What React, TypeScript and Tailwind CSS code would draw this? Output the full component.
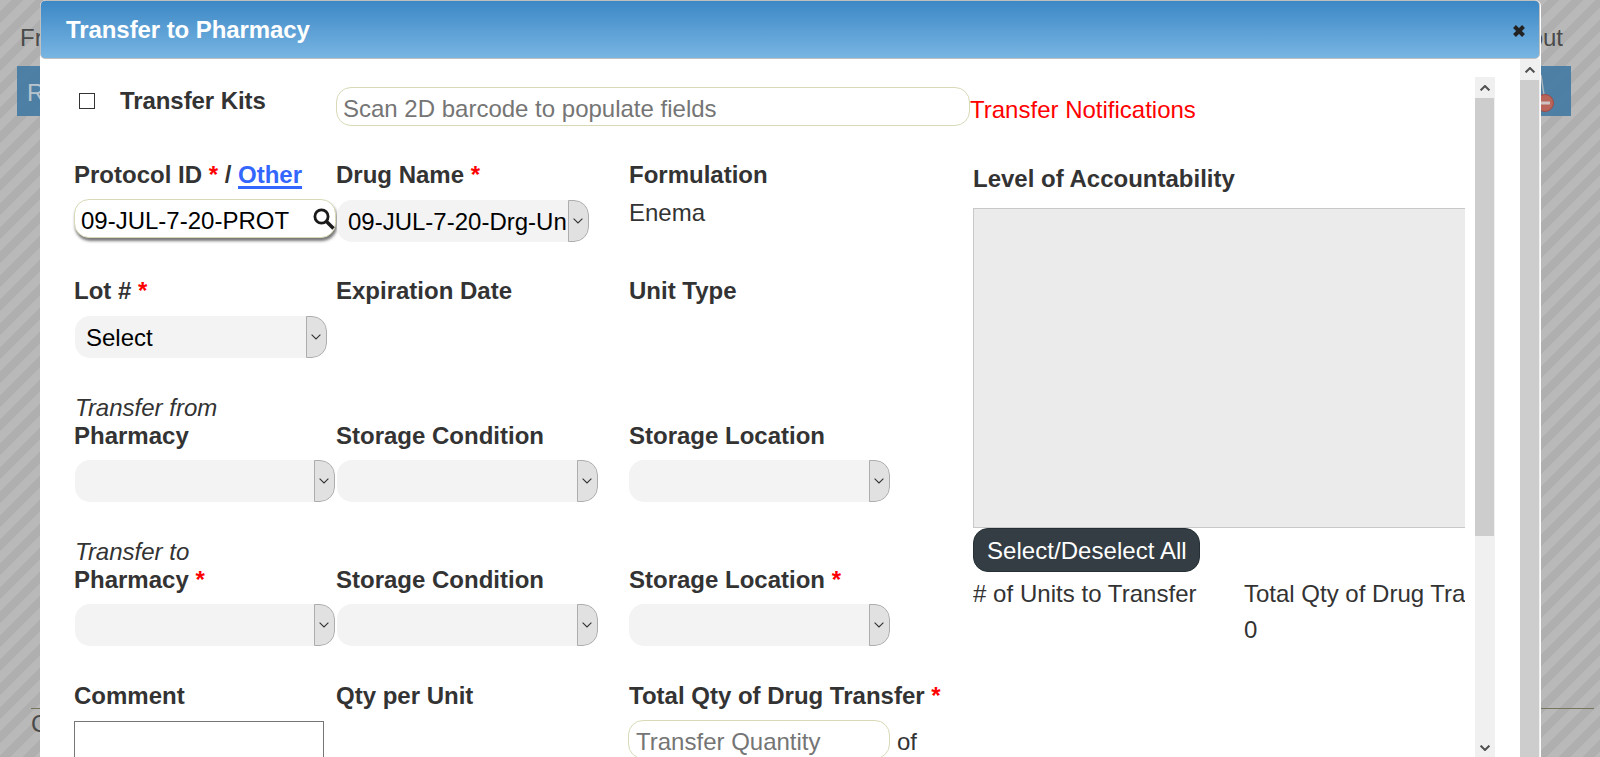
import React from "react";

const Star = () => <span className="text-[#ff0000]"> *</span>;

function Chevron({ className, strong = false, up = false }: { className?: string; strong?: boolean; up?: boolean }) {
  return (
    <svg width="10" height="6" viewBox="0 0 10 6" className={className} fill="none" stroke={strong ? "#505050" : "#333"} strokeWidth={strong ? 2 : 1.1}>
      <path d={up ? "M0.6 5.4 L5 1 L9.4 5.4" : "M0.6 0.6 L5 5 L9.4 0.6"} />
    </svg>
  );
}

function Select({ value = "", className = "" }: { value?: string; className?: string }) {
  return (
    <div className={`flex h-[42px] overflow-hidden rounded-[15px] bg-[#f3f3f3] ${className}`}>
      <div className="min-w-0 flex-1 overflow-hidden whitespace-nowrap pl-[11px] pt-px leading-[42px] text-black">{value}</div>
      <div className="flex w-[21px] shrink-0 items-center justify-center rounded-r-[15px] border border-[#adadad] bg-[#e1e1e1] pr-px">
        <Chevron />
      </div>
    </div>
  );
}

function Label({ children }: { children: React.ReactNode }) {
  return <div className="h-7 whitespace-nowrap font-bold">{children}</div>;
}

function Row({ className, children }: { className: string; children: React.ReactNode }) {
  return <div className={`grid shrink-0 grid-cols-[263px_292px_330px] ${className}`}>{children}</div>;
}

function Backdrop() {
  return (
    <div className="flex h-full w-full flex-col bg-[linear-gradient(135deg,#b9b9b9_25%,#afafaf_25%,#afafaf_50%,#b9b9b9_50%,#b9b9b9_75%,#afafaf_75%)] bg-[length:24px_24px] text-[#4a4a4a]">
      <div className="flex h-[66px] justify-between pl-5 pr-[37px] pt-6">
        <span>Fr</span>
        <span>Logout</span>
      </div>
      <div className="ml-[17px] mr-[29px] flex h-[50px] items-center justify-between bg-[#417aa2]/90 pl-[10px] pr-[17px] text-[#b9c5ce]">
        <span className="pt-1">R</span>
        <svg width="40" height="50" viewBox="0 0 40 50">
          <path d="M27 9 L30 29" stroke="#a9b4bb" strokeWidth="1.5" />
          <circle cx="31" cy="37" r="8.500" fill="#b9655a" stroke="#a04a44" />
          <rect x="26" y="35.500" width="10" height="3" fill="#cfc4c2" />
        </svg>
      </div>
      <div className="ml-[31px] mr-[6px] mt-[592px] border-t border-[#76765f] pt-px">C</div>
    </div>
  );
}

export default function App() {
  return (
    <div className="relative h-[757px] w-[1600px] overflow-hidden font-['Liberation_Sans',Arial,sans-serif] text-2xl leading-7 text-[#333]">
      <Backdrop />
      <div className="absolute left-10 top-0 flex h-[757px] w-[1501px] flex-col overflow-hidden rounded-t-md bg-white">
        <div className="mr-px flex h-[59px] shrink-0 items-center justify-between rounded-[5px] border border-[#c0c0c0] bg-linear-to-b from-[#3b88c6] to-[#78b5e2] pl-[25px] pr-[14px] pt-px font-bold text-white">
          <span className="tracking-[-0.08px]">Transfer to Pharmacy</span>
          <svg width="12" height="12" viewBox="0 0 12 12" stroke="#222" strokeWidth="4" className="mt-[2px]">
            <path d="M1.500 1.500 L10.500 10.500 M10.500 1.500 L1.500 10.500" />
          </svg>
        </div>
        <div className="flex min-h-0 flex-1">
          <div className="flex h-full w-[1425px] flex-col overflow-hidden pl-[34px]">
            <div className="flex h-[102px] shrink-0">
              <div className="flex w-[262px] pt-7">
                <div className="ml-[5px] mt-[6px] h-4 w-4 border border-[#333]" />
                <div className="ml-[25px] font-bold tracking-[-0.08px]">Transfer Kits</div>
              </div>
              <input placeholder="Scan 2D barcode to populate fields" className="mt-7 h-[39px] w-[634px] rounded-[15px] border border-[#d9d9b8] px-[6px] pt-1 placeholder:text-[#757575]" />
              <div className="pt-[37px] text-[#ff0000]">Transfer Notifications</div>
            </div>
            <div className="flex min-h-0 flex-1">
              <div className="flex w-[885px] shrink-0 flex-col">
                <Row className="h-[116px]">
                  <div>
                    <Label>
                      Protocol ID<Star /> / <a className="text-[#3366ff] underline decoration-[2.5px] underline-offset-[3px]">Other</a>
                    </Label>
                    <div className="mt-[10px] flex h-[39px] w-[262px] items-center justify-between rounded-[15px] border border-[#d9d9b8] bg-white pl-[6px] text-black shadow-[1px_3px_3px_#777]">
                      <span className="pt-1">09-JUL-7-20-PROT</span>
                      <svg width="22" height="22" viewBox="0 0 22 22" fill="none" stroke="#1a1a1a">
                        <circle cx="8.500" cy="8.500" r="6.600" strokeWidth="2.800" />
                        <path d="M13.500 13.500 L20.500 20.500" strokeWidth="3.600" />
                      </svg>
                    </div>
                  </div>
                  <div>
                    <div className="-ml-px"><Label>Drug Name<Star /></Label></div>
                    <Select value="09-JUL-7-20-Drg-Un" className="mt-[11px] w-[252px]" />
                  </div>
                  <div>
                    <Label>Formulation</Label>
                    <div className="mt-[10px]">Enema</div>
                  </div>
                </Row>
                <Row className="h-[117px]">
                  <div>
                    <Label>Lot #<Star /></Label>
                    <Select value="Select" className="ml-px mt-[11px] w-[252px]" />
                  </div>
                  <div className="-ml-px"><Label>Expiration Date</Label></div>
                  <Label>Unit Type</Label>
                </Row>
                <Row className="h-[144px] content-start">
                  <div className="col-span-3 h-7 pl-px italic">Transfer from</div>
                  <Label>Pharmacy</Label>
                  <div className="-ml-px"><Label>Storage Condition</Label></div>
                  <Label>Storage Location</Label>
                  <Select className="ml-px mt-[10px] w-[260px]" />
                  <Select className="mt-[10px] w-[261px]" />
                  <Select className="mt-[10px] w-[261px]" />
                </Row>
                <Row className="h-[144px] content-start">
                  <div className="col-span-3 h-7 pl-px italic">Transfer to</div>
                  <Label>Pharmacy<Star /></Label>
                  <div className="-ml-px"><Label>Storage Condition</Label></div>
                  <Label>Storage Location<Star /></Label>
                  <Select className="ml-px mt-[10px] w-[260px]" />
                  <Select className="mt-[10px] w-[261px]" />
                  <Select className="mt-[10px] w-[261px]" />
                </Row>
                <Row className="h-[100px]">
                  <div>
                    <Label>Comment</Label>
                    <div className="mt-[11px] h-20 w-[250px] border border-[#767676] bg-white" />
                  </div>
                  <div className="-ml-px"><Label>Qty per Unit</Label></div>
                  <div>
                    <Label>Total Qty of Drug Transfer<Star /></Label>
                    <div className="-ml-px mt-[10px] flex">
                      <input placeholder="Transfer Quantity" className="h-[39px] w-[262px] rounded-[15px] border border-[#d9d9b8] px-[7px] pt-1 placeholder:text-[#757575]" />
                      <span className="ml-[7px] mt-2">of</span>
                    </div>
                  </div>
                </Row>
              </div>
              <div className="ml-[14px] w-[492px] shrink-0 overflow-hidden pt-1">
                <div className="h-[43px] font-bold">Level of Accountability</div>
                <div className="h-80 w-[600px] border border-[#c8c8c8] bg-[#ebebeb]" />
                <button className="block h-11 w-[227px] whitespace-nowrap rounded-[15px] border border-[#253035] bg-[#333d43] pl-[13px] pt-[2px] text-left tracking-[0.05px] text-white">Select/Deselect All</button>
                <div className="mt-2 flex whitespace-nowrap">
                  <div className="w-[271px] shrink-0 tracking-[0.04px]"># of Units to Transfer</div>
                  <div>
                    Total Qty of Drug Tra
                    <div className="mt-2">0</div>
                  </div>
                </div>
              </div>
            </div>
          </div>
          <div className="ml-[10px] mt-[18px] flex w-5 flex-col items-center bg-[#f0f0f0]">
            <div className="flex h-[21px] w-full items-center justify-center pr-px"><Chevron strong up /></div>
            <div className="mr-px h-[438px] w-[19px] bg-[#cdcdcd]" />
            <div className="flex flex-1 items-end pb-[6px] pr-px"><Chevron strong /></div>
          </div>
          <div className="ml-[25px] flex w-5 flex-col items-center bg-[#f0f0f0]">
            <div className="flex h-[21px] w-full items-center justify-center pr-px"><Chevron strong up /></div>
            <div className="mr-px w-[19px] flex-1 bg-[#cdcdcd]" />
          </div>
        </div>
      </div>
    </div>
  );
}
